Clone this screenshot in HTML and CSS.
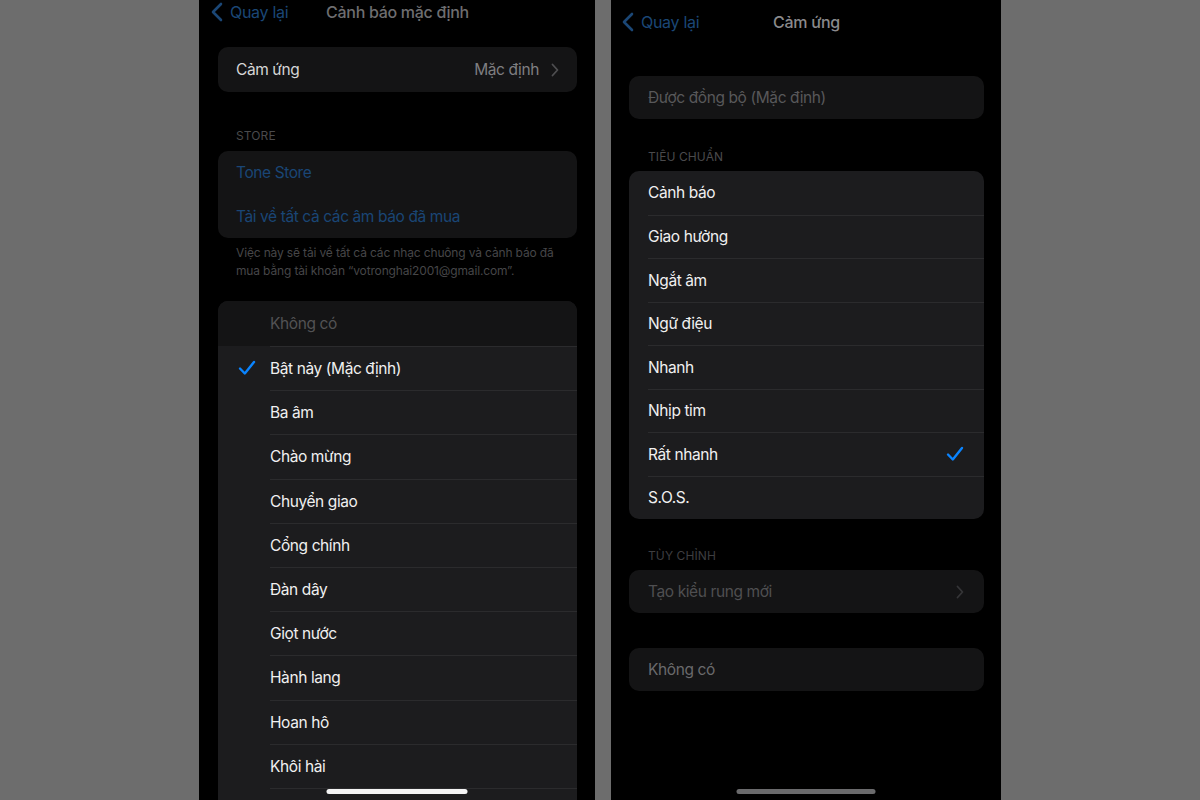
FILE: index.html
```html
<!DOCTYPE html>
<html lang="vi">
<head>
<meta charset="utf-8">
<title>Cảnh báo mặc định</title>
<link rel="stylesheet" href="styles.css">
</head>
<body>
<div class="stage">
  <section class="phone phone-left">
    <div class="nav nav-short">
      <span class="back"><svg class="back-chev" viewBox="0 0 12 20" width="12" height="20"><path d="M10 2 L2 10 L10 18" fill="none" stroke="currentColor" stroke-width="2.6" stroke-linecap="round" stroke-linejoin="round"/></svg>Quay lại</span>
      <span class="nav-title">Cảnh báo mặc định</span>
    </div>

    <div class="card dim card-single">
      <div class="row">
        <span class="label-dim-strong">Cảm ứng</span>
        <span class="value">Mặc định<svg class="disc" viewBox="0 0 8 14" width="8" height="14"><path d="M1.5 1.5 L6.5 7 L1.5 12.5" fill="none" stroke="currentColor" stroke-width="1.8" stroke-linecap="round" stroke-linejoin="round"/></svg></span>
      </div>
    </div>

    <div class="section-head head-store">STORE</div>
    <div class="card dim card-store">
      <div class="row link">Tone Store</div>
      <div class="row link">Tải về tất cả các âm báo đã mua</div>
    </div>
    <p class="footnote"><span class="fn-line">Việc này sẽ tải về tất cả các nhạc chuông và cảnh báo đã</span><span class="fn-line">mua bằng tài khoản “votronghai2001@gmail.com”.</span></p>

    <div class="card tone-list">
      <div class="row dim-row"><span class="check-slot"></span><span class="label-dim">Không có</span></div>
      <div class="bright">
        <div class="row"><span class="check-slot"><svg class="check" viewBox="0 0 18 16" width="18" height="16"><path d="M2 8.5 L6.8 13.5 L16 2" fill="none" stroke="currentColor" stroke-width="2.4" stroke-linecap="round" stroke-linejoin="round"/></svg></span><span class="label sep">Bật nảy (Mặc định)</span></div>
        <div class="row"><span class="check-slot"></span><span class="label sep">Ba âm</span></div>
        <div class="row"><span class="check-slot"></span><span class="label sep">Chào mừng</span></div>
        <div class="row"><span class="check-slot"></span><span class="label sep">Chuyển giao</span></div>
        <div class="row"><span class="check-slot"></span><span class="label sep">Cổng chính</span></div>
        <div class="row"><span class="check-slot"></span><span class="label sep">Đàn dây</span></div>
        <div class="row"><span class="check-slot"></span><span class="label sep">Giọt nước</span></div>
        <div class="row"><span class="check-slot"></span><span class="label sep">Hành lang</span></div>
        <div class="row"><span class="check-slot"></span><span class="label sep">Hoan hô</span></div>
        <div class="row"><span class="check-slot"></span><span class="label sep">Khôi hài</span></div>
        <div class="row"><span class="check-slot"></span><span class="label sep"></span></div>
      </div>
    </div>
    <div class="home-bar home-bright"></div>
  </section>

  <section class="phone phone-right">
    <div class="nav nav-tall">
      <span class="back"><svg class="back-chev" viewBox="0 0 12 20" width="12" height="20"><path d="M10 2 L2 10 L10 18" fill="none" stroke="currentColor" stroke-width="2.6" stroke-linecap="round" stroke-linejoin="round"/></svg>Quay lại</span>
      <span class="nav-title nav-title-r">Cảm ứng</span>
    </div>

    <div class="card dim card-sync">
      <div class="row r-row"><span class="label-dim2">Được đồng bộ (Mặc định)</span></div>
    </div>

    <div class="section-head head-std">TIÊU CHUẨN</div>
    <div class="card std-list">
      <div class="row r-row"><span class="label">Cảnh báo</span></div>
      <div class="row r-row"><span class="label sep">Giao hưởng</span></div>
      <div class="row r-row"><span class="label sep">Ngắt âm</span></div>
      <div class="row r-row"><span class="label sep">Ngữ điệu</span></div>
      <div class="row r-row"><span class="label sep">Nhanh</span></div>
      <div class="row r-row"><span class="label sep">Nhịp tim</span></div>
      <div class="row r-row"><span class="label sep">Rất nhanh<svg class="check check-r" viewBox="0 0 18 16" width="18" height="16"><path d="M2 8.5 L6.8 13.5 L16 2" fill="none" stroke="currentColor" stroke-width="2.4" stroke-linecap="round" stroke-linejoin="round"/></svg></span></div>
      <div class="row r-row"><span class="label sep">S.O.S.</span></div>
    </div>

    <div class="section-head head-custom">TÙY CHỈNH</div>
    <div class="card dim card-new">
      <div class="row r-row"><span class="label-dim3">Tạo kiểu rung mới</span><svg class="disc disc-dim" viewBox="0 0 8 14" width="8" height="14"><path d="M1.5 1.5 L6.5 7 L1.5 12.5" fill="none" stroke="currentColor" stroke-width="1.8" stroke-linecap="round" stroke-linejoin="round"/></svg></div>
    </div>

    <div class="card dim card-none">
      <div class="row r-row"><span class="label-dim4">Không có</span></div>
    </div>
    <div class="home-bar home-dim"></div>
  </section>
</div>
</body>
</html>
```

FILE: styles.css
```css
* { box-sizing: border-box; }

html, body {
  margin: 0;
  padding: 0;
  height: 800px;
  overflow: hidden;
}

body {
  background: #6d6d6d;
  font-family: Inter, "Noto Sans", "Liberation Sans", sans-serif;
  -webkit-font-smoothing: antialiased;
}

.stage {
  display: flex;
  height: 800px;
  padding-left: 199px;
  gap: 16px;
}

.phone {
  position: relative;
  height: 800px;
  background: #000;
  overflow: hidden;
  display: flex;
  flex-direction: column;
}

.phone-left {
  width: 396px;
  padding: 0 18px 0 19px;
}

.phone-right {
  width: 390px;
  padding: 0 17px 0 18px;
}

/* navigation */
.nav {
  position: relative;
  display: flex;
  align-items: center;
  flex-shrink: 0;
  font-size: 16px;
  letter-spacing: -0.3px;
}

.nav-short { height: 24px; margin-left: -7px; }
.nav-tall { height: 44px; margin-left: -7px; }

.back {
  display: flex;
  align-items: center;
  gap: 7px;
  color: #1b4776;
}

.back-chev { color: #1b4776; }

.nav-title {
  position: absolute;
  left: 0;
  right: 0;
  text-align: center;
  color: #6e6e70;
  font-weight: 500;
  pointer-events: none;
  padding-left: 7px;
}

.nav-title-r { color: #8a8a8c; }

/* cards */
.card {
  border-radius: 10px;
  background: #1c1c1e;
  overflow: hidden;
  flex-shrink: 0;
}

.card.dim { background: #141415; }

.row {
  display: flex;
  align-items: center;
  height: 44px;
  font-size: 15.5px;
  letter-spacing: -0.4px;
  color: #f0f0f0;
}

.card-single { margin-top: 23px; }
.card-single .row {
  height: 45px;
  padding: 0 18px;
  justify-content: space-between;
}

.label-dim-strong { color: #d6d6d6; }

.value {
  display: flex;
  align-items: center;
  gap: 12px;
  color: #7f7f81;
}

.disc { color: #4e4e50; }

.section-head {
  font-size: 12px;
  line-height: 16px;
  letter-spacing: 0.1px;
  color: #4a4a4c;
  padding-left: 18px;
  flex-shrink: 0;
}

.head-store { margin-top: 36px; margin-bottom: 7px; }

.card-store .row {
  height: 43.5px;
  padding: 0 18px;
}

.link { color: #1a4675; }

.footnote {
  margin: 6px 0 0;
  padding: 0 18px;
  font-size: 12px;
  line-height: 18px;
  letter-spacing: -0.15px;
  color: #464648;
}

.fn-line {
  display: block;
  white-space: nowrap;
}

.tone-list {
  margin-top: 21px;
  border-radius: 10px 10px 0 0;
}

.tone-list .row {
  height: 44.2px;
}

.tone-list .dim-row {
  height: 45px;
  background: #141415;
}

.check-slot {
  width: 52px;
  flex-shrink: 0;
  display: flex;
  align-items: center;
  padding-left: 20px;
}

.check { color: #0a84ff; }

.label-dim { color: #525254; }

.label {
  flex: 1;
  height: 100%;
  display: flex;
  align-items: center;
}

.label.sep { border-top: 1px solid #2b2b2d; }

.bright { background: #1c1c1e; }

/* right phone */
.card-sync { margin-top: 32px; }

.r-row {
  padding-left: 19px;
  height: 43.5px;
}

.card-sync .r-row { height: 43px; }

.label-dim2 { color: #58585a; }

.head-std { margin-top: 30px; margin-bottom: 7px; padding-left: 19px; }

.std-list { margin-top: -1px; }
.std-list .r-row { padding-left: 19px; }

.check-r { margin-left: auto; margin-right: 20px; }

.head-custom { margin-top: 29px; margin-bottom: 6px; padding-left: 19px; color: #3e3e40; }

.card-new .r-row {
  height: 43px;
  padding-right: 20px;
  justify-content: space-between;
}

.label-dim3 { color: #4f4f51; }
.disc-dim { color: #353537; }

.card-none { margin-top: 35px; }
.card-none .r-row { height: 43px; }
.label-dim4 { color: #6a6a6c; }

/* home indicator overlays content */
.home-bar {
  position: absolute;
  bottom: 6px;
  left: 50%;
  transform: translateX(-50%);
  width: 141px;
  height: 5px;
  border-radius: 3px;
}

.home-bright { background: #f4f4f4; }
.home-dim { background: #6a6a6c; width: 139px; }
```
